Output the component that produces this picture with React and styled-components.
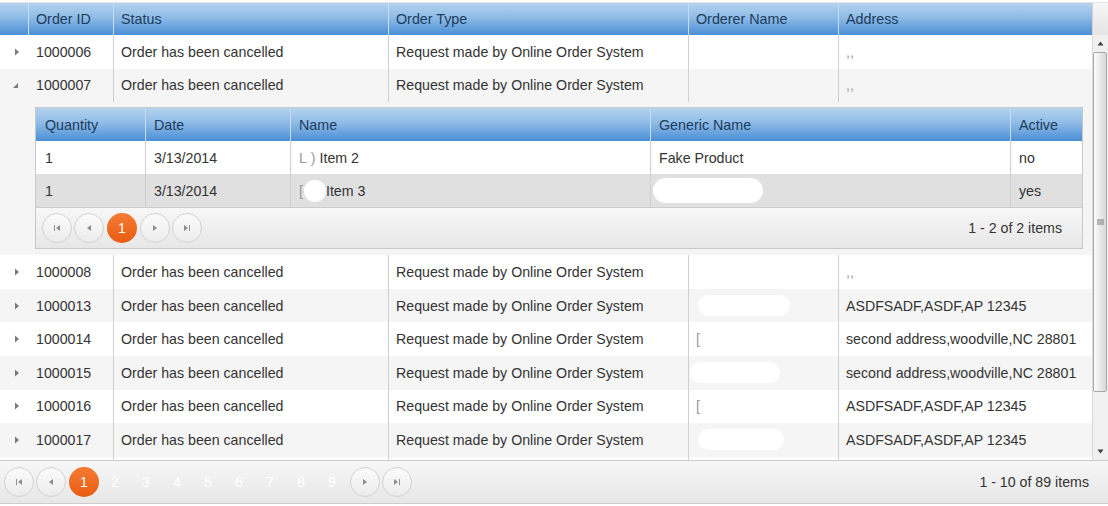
import React from "react";
import styled, { createGlobalStyle } from "styled-components";

const GlobalStyle = createGlobalStyle`
  body {
    margin: 0;
    background: #fff;
    font-family: "Liberation Sans", Arial, sans-serif;
  }
`;

const OUTER_COLS = "28px 85px 275px 300px 150px 254px";
const INNER_COLS = "109px 145px 360px 360px 72px";

const orders = [
  { id: "1000006", address: ",,", empty: true },
  { id: "1000007", address: ",,", empty: true, expanded: true },
  { id: "1000008", address: ",,", empty: true },
  { id: "1000013", address: "ASDFSADF,ASDF,AP 12345", blob: 92 },
  { id: "1000014", address: "second address,woodville,NC 28801", mark: true },
  { id: "1000015", address: "second address,woodville,NC 28801", blob: 90, shift: -6 },
  { id: "1000016", address: "ASDFSADF,ASDF,AP 12345", mark: true },
  { id: "1000017", address: "ASDFSADF,ASDF,AP 12345", blob: 86 },
  { id: "1000018", address: "ASDFSADF,ASDF,AP 12345" },
];

const Grid = styled.div`
  width: 1108px;
  margin-top: 2px;
  border-top: 1px solid #e4e4e4;
`;

const HeaderRow = styled.div`
  display: grid;
  grid-template-columns: ${(p) => p.$cols} ${(p) => (p.$scroll ? "16px" : "")};
  height: ${(p) => p.$h}px;
  background: linear-gradient(#b4d3f0, #8fbbe6 45%, #4a8fd6);
`;

const HeadCell = styled.div`
  padding: 0 ${(p) => p.$pad || 7}px;
  display: flex;
  align-items: center;
  font-size: 14.3px;
  color: #1d3c5c;
  border-left: ${(p) => (p.$first ? "none" : "1px solid #c6dcf1")};
  white-space: nowrap;
  overflow: hidden;
`;

const ScrollHead = styled.div`
  background: linear-gradient(#f6f6f6, #e4e4e4);
  border-left: 1px solid #d4d4d4;
`;

const Body = styled.div`
  display: flex;
  height: 425px;
  overflow: hidden;
`;

const Rows = styled.div`
  width: 1092px;
`;

const Row = styled.div`
  display: grid;
  grid-template-columns: ${OUTER_COLS};
  height: 33.6px;
  background: ${(p) => (p.$alt ? "#f5f5f5" : "#fff")};
`;

const Cell = styled.div`
  display: flex;
  align-items: center;
  padding: 0 ${(p) => (p.$bare ? 8 : 7)}px;
  font-size: 14.2px;
  color: #333;
  border-left: ${(p) => (p.$bare ? "none" : "1px solid #cfcfcf")};
  white-space: nowrap;
  overflow: hidden;
`;

const Hier = styled.div`
  display: flex;
  align-items: center;
  justify-content: center;
  padding-left: 4px;
`;

const Faint = styled.span`
  color: #9a9a9a;
`;

const Blob = styled.span`
  display: inline-block;
  width: ${(p) => p.$w}px;
  height: ${(p) => p.$h || 21}px;
  margin-left: ${(p) => p.$ml || 0}px;
  background: #fff;
  border-radius: ${(p) => p.$r || 11}px;
  flex-shrink: 0;
`;

const Detail = styled.div`
  background: #f5f5f5;
  padding: 5px 9px 6px 35px;
`;

const Nested = styled.div`
  border: 1px solid #c8c8c8;
  background: #fff;
`;

const NestedRow = styled.div`
  display: grid;
  grid-template-columns: ${INNER_COLS};
  height: 33px;
  background: ${(p) => (p.$alt ? "#e0e0e0" : "#fff")};
`;

const NestedCell = styled(Cell)`
  padding: 0 ${(p) => (p.$bare ? 9 : 8)}px;
`;

const PagerBar = styled.div`
  display: flex;
  align-items: center;
  height: ${(p) => p.$h}px;
  padding: 0 ${(p) => p.$right}px 0 ${(p) => p.$left}px;
  background: linear-gradient(#f7f7f7, #e7e7e7);
  border-top: 1px solid #cccccc;
  border-bottom: ${(p) => (p.$bottom ? "1px solid #cccccc" : "none")};
`;

const PagerNav = styled.div`
  display: flex;
  align-items: center;
  gap: 2px;
`;

const PagerButton = styled.div`
  width: 28px;
  height: 28px;
  border-radius: 50%;
  border: 1px solid #d2d2d2;
  background: linear-gradient(#fbfbfb, #ececec);
  display: flex;
  align-items: center;
  justify-content: center;
`;

const PageCurrent = styled.div`
  width: 30px;
  height: 30px;
  border-radius: 50%;
  background: linear-gradient(#f57b34, #e85c12);
  color: #fff;
  font-size: 14px;
  display: flex;
  align-items: center;
  justify-content: center;
  margin: 0 1px;
`;

const PageLinks = styled.div`
  display: flex;
  margin-left: -2.5px;
`;

const PageLink = styled.div`
  width: 31px;
  text-align: center;
  font-size: 14px;
  color: #fff;
`;

const PagerInfo = styled.div`
  margin-left: auto;
  font-size: 14.2px;
  color: #333;
`;

const Scrollbar = styled.div`
  width: 16px;
  display: flex;
  flex-direction: column;
  background: #f0f0f0;
  border-left: 1px solid #dadada;
  box-sizing: border-box;
`;

const ScrollArrow = styled.div`
  height: 17px;
  display: flex;
  align-items: center;
  justify-content: center;
`;

const Thumb = styled.div`
  height: 338px;
  margin: 0 1px 0 0;
  border: 1px solid #a9a9a9;
  border-radius: 2px;
  background: linear-gradient(90deg, #fdfdfd, #e6e6e6 60%, #d8d8d8);
  display: flex;
  align-items: center;
  justify-content: center;
`;

const Track = styled.div`
  flex: 1;
`;

function Arrow({ open }) {
  return open ? (
    <svg width="8" height="8" viewBox="0 0 8 8">
      <path d="M6 2 L6 7 L1 7 Z" fill="#7a7a7a" />
    </svg>
  ) : (
    <svg width="8" height="8" viewBox="0 0 8 8">
      <path d="M3 0.5 L7 4 L3 7.5 Z" fill="#7a7a7a" />
    </svg>
  );
}

function PagerIcon({ kind }) {
  const paths = {
    first: "M2 2 H3 V8 H2 Z M8 2 L4 5 L8 8 Z",
    prev: "M7 2 L3 5 L7 8 Z",
    next: "M3 2 L7 5 L3 8 Z",
    last: "M2 2 L6 5 L2 8 Z M7 2 H8 V8 H7 Z",
  };
  return (
    <svg width="10" height="10" viewBox="0 0 10 10">
      <path d={paths[kind]} fill="#8e8e8e" />
    </svg>
  );
}

function Pager({ pages, info, h, left, right, bottom }) {
  return (
    <PagerBar $h={h} $left={left} $right={right} $bottom={bottom}>
      <PagerNav>
        <PagerButton><PagerIcon kind="first" /></PagerButton>
        <PagerButton><PagerIcon kind="prev" /></PagerButton>
        <PageCurrent>1</PageCurrent>
        {pages.length > 0 && (
          <PageLinks>
            {pages.map((n) => (
              <PageLink key={n}>{n}</PageLink>
            ))}
          </PageLinks>
        )}
        <PagerButton><PagerIcon kind="next" /></PagerButton>
        <PagerButton><PagerIcon kind="last" /></PagerButton>
      </PagerNav>
      <PagerInfo>{info}</PagerInfo>
    </PagerBar>
  );
}

function OrdererName({ order }) {
  if (order.blob) return <Blob $w={order.blob} $ml={order.shift || 2} />;
  if (order.mark) return <Faint>[</Faint>;
  return null;
}

function OrderRow({ order, alt }) {
  return (
    <Row $alt={alt}>
      <Hier><Arrow open={order.expanded} /></Hier>
      <Cell $bare>{order.id}</Cell>
      <Cell>Order has been cancelled</Cell>
      <Cell>Request made by Online Order System</Cell>
      <Cell>
        <OrdererName order={order} />
      </Cell>
      <Cell>{order.empty ? <Faint>{order.address}</Faint> : order.address}</Cell>
    </Row>
  );
}

function OrderDetail() {
  return (
    <Detail>
      <Nested>
        <HeaderRow $cols={INNER_COLS} $h={33}>
          <HeadCell $first $pad={9}>Quantity</HeadCell>
          <HeadCell $pad={8}>Date</HeadCell>
          <HeadCell $pad={8}>Name</HeadCell>
          <HeadCell $pad={8}>Generic Name</HeadCell>
          <HeadCell $pad={8}>Active</HeadCell>
        </HeaderRow>
        <NestedRow>
          <NestedCell $bare>1</NestedCell>
          <NestedCell>3/13/2014</NestedCell>
          <NestedCell>
            <Faint>L&nbsp;)</Faint>&nbsp;Item 2
          </NestedCell>
          <NestedCell>Fake Product</NestedCell>
          <NestedCell>no</NestedCell>
        </NestedRow>
        <NestedRow $alt>
          <NestedCell $bare>1</NestedCell>
          <NestedCell>3/13/2014</NestedCell>
          <NestedCell>
            <Faint>[</Faint>
            <Blob $w={22} $h={22} $ml={1} />
            Item 3
          </NestedCell>
          <NestedCell>
            <Blob $w={110} $h={25} $r={13} $ml={-6} />
          </NestedCell>
          <NestedCell>yes</NestedCell>
        </NestedRow>
        <Pager pages={[]} info="1 - 2 of 2 items" h={40} left={6} right={20} />
      </Nested>
    </Detail>
  );
}

export default function App() {
  return (
    <>
      <GlobalStyle />
      <Grid>
        <HeaderRow $cols={OUTER_COLS} $scroll $h={32}>
          <HeadCell $first />
          <HeadCell>Order ID</HeadCell>
          <HeadCell>Status</HeadCell>
          <HeadCell>Order Type</HeadCell>
          <HeadCell>Orderer Name</HeadCell>
          <HeadCell>Address</HeadCell>
          <ScrollHead />
        </HeaderRow>
        <Body>
          <Rows>
            {orders.map((order, i) => (
              <React.Fragment key={order.id}>
                <OrderRow order={order} alt={i % 2 === 1} />
                {order.expanded && <OrderDetail />}
              </React.Fragment>
            ))}
          </Rows>
          <Scrollbar>
            <ScrollArrow>
              <svg width="7" height="5" viewBox="0 0 7 5">
                <path d="M3.5 0.5 L6.5 4.5 L0.5 4.5 Z" fill="#404040" />
              </svg>
            </ScrollArrow>
            <Thumb>
              <svg width="7" height="7" viewBox="0 0 7 7">
                <path d="M0 1 H7 M0 3 H7 M0 5 H7" stroke="#7c7c7c" strokeWidth="1" />
              </svg>
            </Thumb>
            <Track />
            <ScrollArrow>
              <svg width="7" height="5" viewBox="0 0 7 5">
                <path d="M0.5 0.5 L6.5 0.5 L3.5 4.5 Z" fill="#404040" />
              </svg>
            </ScrollArrow>
          </Scrollbar>
        </Body>
        <Pager
          pages={[2, 3, 4, 5, 6, 7, 8, 9]}
          info="1 - 10 of 89 items"
          h={42}
          left={4}
          right={19}
          bottom
        />
      </Grid>
    </>
  );
}
